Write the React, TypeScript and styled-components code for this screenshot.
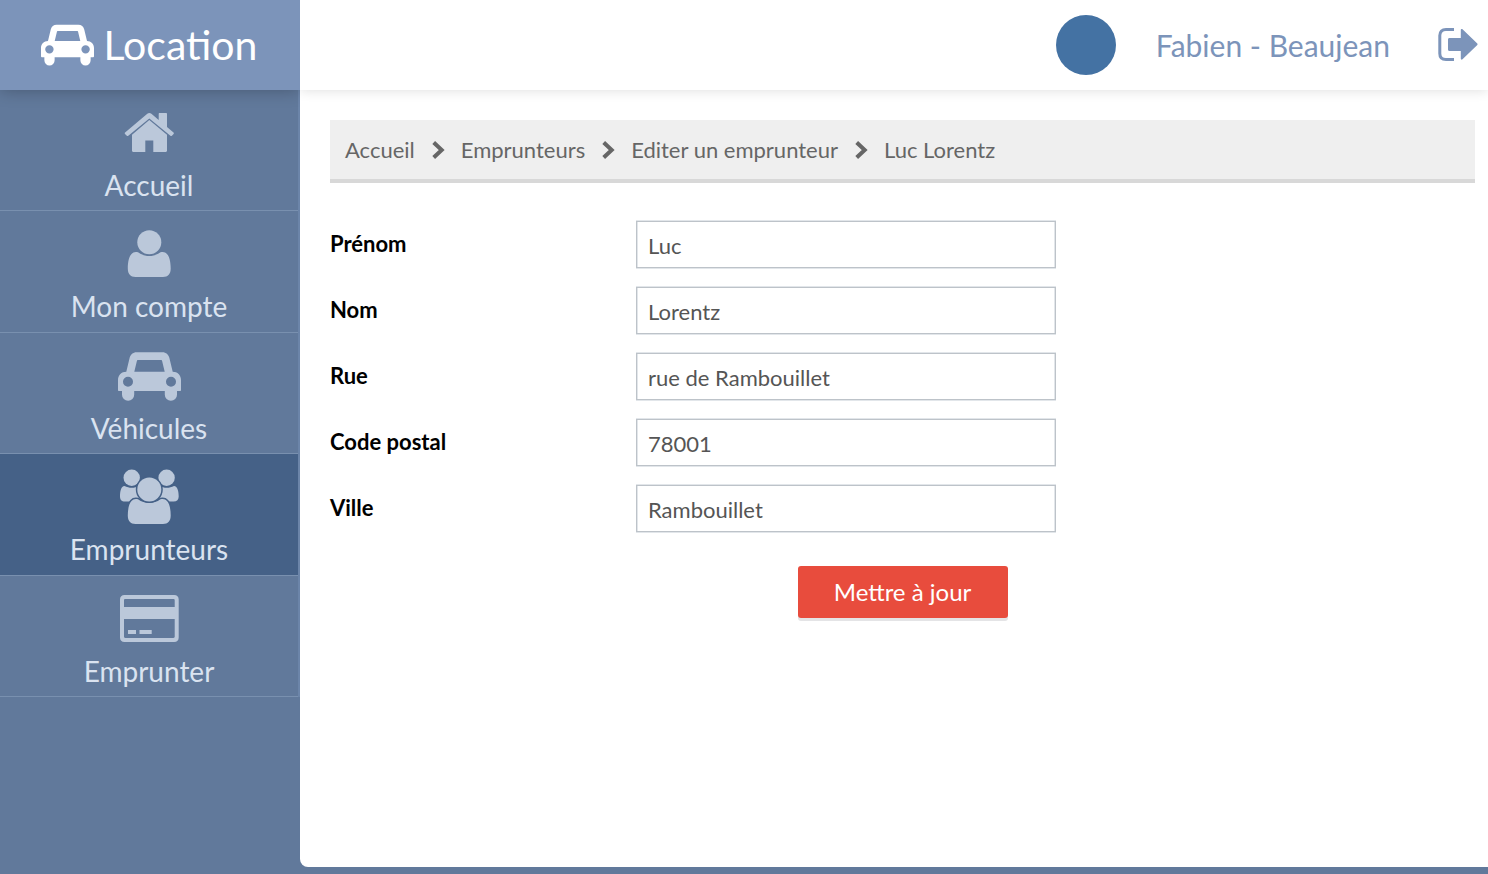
import React from "react";
import styled, { createGlobalStyle } from "styled-components";

const colors = {
  sidebar: "#61799b",
  active: "#456187",
  brand: "#7c94ba",
  line: "#7990af",
  edge: "#6c85a9",
  navText: "#dae3f0",
  navIcon: "#bbc8da",
};

const GlobalStyle = createGlobalStyle`
  *, *::before, *::after { box-sizing: border-box; }
  body {
    margin: 0;
    background: ${colors.sidebar};
    font-family: Lato, Calibri, "Liberation Sans", sans-serif;
  }
`;

const Page = styled.div`
  display: grid;
  grid-template-columns: 300px minmax(0, 1fr);
  grid-template-rows: 90px 1fr;
  min-height: 100vh;
`;

const Brand = styled.a`
  display: flex;
  align-items: center;
  justify-content: center;
  gap: 10px;
  padding-right: 2px;
  background: ${colors.brand};
  color: #fff;
  font-size: 41px;
  line-height: 48px;
  text-decoration: none;
  box-shadow: 0 0 16px rgba(0, 0, 0, 0.28);
  clip-path: inset(0 0 -24px 0);
  z-index: 1;
`;

const Header = styled.header`
  display: flex;
  align-items: center;
  justify-content: flex-end;
  padding-right: 10px;
  background: #fff;
  color: ${colors.brand};
  box-shadow: 0 0 12px rgba(0, 0, 0, 0.14);
  clip-path: inset(0 0 -20px 0);
  z-index: 1;
`;

const Avatar = styled.span`
  width: 60px;
  height: 60px;
  margin-right: 40px;
  border-radius: 50%;
  background: #4472a3;
`;

const UserName = styled.span`
  margin-right: 48px;
  font-size: 30px;
  line-height: 36px;
`;

const LogoutButton = styled.button`
  display: block;
  padding: 0;
  border: 0;
  background: none;
  color: inherit;
  cursor: pointer;

  svg {
    display: block;
  }
`;

const Sidebar = styled.nav`
  background: ${colors.sidebar};
`;

const NavList = styled.ul`
  display: grid;
  grid-auto-rows: 1fr;
  height: 607px;
  margin: 0;
  padding: 0;
  list-style: none;
  border-right: 2px solid ${colors.edge};
`;

const NavLink = styled.a<{ $active?: boolean }>`
  display: flex;
  flex-direction: column;
  align-items: center;
  height: 100%;
  padding-top: 11px;
  border-bottom: 1px solid ${colors.line};
  background: ${(p) => (p.$active ? colors.active : "transparent")};
  color: ${colors.navText};
  font-size: 28px;
  line-height: 34px;
  text-decoration: none;

  svg {
    flex: none;
    margin-bottom: 3px;
    color: ${colors.navIcon};
  }
`;

const Content = styled.main`
  margin-bottom: 7px;
  padding: 30px 13px 30px 30px;
  border-bottom-left-radius: 8px;
  background: #fff;
`;

const Breadcrumb = styled.ol`
  display: flex;
  flex-wrap: wrap;
  align-items: center;
  gap: 16px;
  min-height: 63px;
  margin: 0 0 38px;
  padding: 0 15px;
  border-bottom: 4px solid #d8d8d8;
  background: #efefef;
  list-style: none;
  color: #666;
  font-size: 22px;
  line-height: 28px;
`;

const Crumb = styled.li`
  display: flex;
  align-items: center;
  gap: 15px;

  a {
    color: inherit;
    text-decoration: none;
  }
`;

const Form = styled.form`
  display: flex;
  flex-direction: column;
  gap: 19px;
`;

const Field = styled.div`
  display: grid;
  grid-template-columns: 306px minmax(0, 420px);
  align-items: center;
`;

const Label = styled.label`
  padding-bottom: 2px;
  color: #000;
  font-size: 22px;
  font-weight: 700;
  line-height: 28px;
`;

const TextInput = styled.input`
  width: 100%;
  height: 47px;
  padding: 2px 10px 0 11px;
  border: 1px solid #bdc3c9;
  border-radius: 0;
  outline: none;
  background: #fff;
  box-shadow: 0 -1px #e2e6ea, 0 1px #e2e6ea, inset 1px 0 #e2e6ea, inset -1px 0 #e2e6ea;
  color: #555;
  font-family: inherit;
  font-size: 22px;
  line-height: 28px;
`;

const SubmitButton = styled.button`
  align-self: center;
  width: 210px;
  height: 52px;
  margin-top: 15px;
  padding: 0;
  border: 0;
  border-radius: 3px;
  background: #e84c3d;
  box-shadow: 0 3px #e4e4e6;
  color: #fff;
  font-family: inherit;
  font-size: 24px;
  line-height: 28px;
  cursor: pointer;
`;

const CarIcon = ({ width, height, viewBox }: { width: number; height: number; viewBox: string }) => (
  <svg width={width} height={height} viewBox={viewBox} fill="currentColor" aria-hidden="true">
    <path
      fillRule="evenodd"
      d="M8.3 19.7 11.6 6C12.4 2.600 15 .3 18.500 .3H44.500C48 .3 50.600 2.600 51.400 6L54.700 19.700C59.500 19.700 63 23.200 63 28V38C63 38.700 62.600 39 62 39H59V42.700A6.100 6.100 0 0 1 46.800 42.700V39H16.200V42.700A6.100 6.100 0 0 1 4 42.700V39H1C.4 39 0 38.700 0 38V28C0 23.200 3.500 19.700 8.300 19.700ZM16.300 19.700H46.700L44 8.600C43.900 8.200 43.700 8 43.300 8H19.700C19.300 8 19.100 8.200 19 8.600ZM10 24.700A5 5 0 1 0 10 34.700A5 5 0 1 0 10 24.700ZM53 24.700A5 5 0 1 0 53 34.700A5 5 0 1 0 53 24.700Z"
    />
  </svg>
);

const HomeIcon = () => (
  <svg width="64" height="64" viewBox="0 0 64 64" fill="currentColor" aria-hidden="true">
    <path d="M30.300 12.800C31.500 11.700 33.200 11.700 34.400 12.800L41.700 19V13C41.700 12.400 42.100 12 42.700 12H49C49.600 12 50 12.400 50 13V26L56.500 31.500C57 31.900 57 32.500 56.600 33L54.900 34.700C54.500 35.200 53.900 35.200 53.400 34.800L32.300 17.500 11.300 34.800C10.800 35.200 10.200 35.200 9.800 34.700L8 33C7.600 32.500 7.600 31.900 8.100 31.500Z" />
    <path d="M32.300 19 50 33.700V49.500C50 50.400 49.400 51 48.500 51H36.300V39.500H28.300V51H16.500C15.600 51 15 50.400 15 49.500V33.700Z" />
  </svg>
);

const bodyPath =
  "M21 31.300C18 30.600 16 31.300 14.500 33 12.200 35.500 10.800 40.500 10.800 47.500 10.800 53 13.500 56 18.500 56H46C51 56 53.700 53 53.700 47.500 53.700 40.500 52.300 35.500 50 33 48.500 31.300 46.500 30.600 43.500 31.300 36.500 36.300 28 36.300 21 31.300Z";

const UserIcon = () => (
  <svg width="64" height="64" viewBox="0 1 64 64" fill="currentColor" aria-hidden="true">
    <circle cx="32.300" cy="21.300" r="12" />
    <path d={bodyPath} />
  </svg>
);

const UsersIcon = () => (
  <svg width="64" height="64" viewBox="0 0 64 64" fill="currentColor" aria-hidden="true">
    <circle cx="14.700" cy="12.800" r="8.200" />
    <circle cx="49.600" cy="12.800" r="8.200" />
    <path d="M7.500 20.900C12 23.300 17.500 23.300 22 20.900L30 24V36.500H8C4.500 36.500 3 34.500 3 31.500 3 26.500 4 20.900 7.500 20.900Z" />
    <path d="M57 20.900C52.500 23.300 47 23.300 42.500 20.900L34.500 24V36.500H56.500C60 36.500 61.700 34.500 61.700 31.500 61.700 26.500 60.500 20.900 57 20.900Z" />
    <g stroke={colors.active} strokeWidth="3" paintOrder="stroke">
      <path d={bodyPath} transform="translate(0 3)" />
      <circle cx="32.300" cy="24.500" r="12" />
    </g>
  </svg>
);

const CardIcon = () => (
  <svg width="64" height="64" viewBox="0 0 64 64" fill="currentColor" aria-hidden="true">
    <path
      fillRule="evenodd"
      d="M7.500 8H57.200C60 8 61.700 9.700 61.700 12.500V50.500C61.700 53.300 60 55 57.200 55H7.500C4.700 55 3 53.300 3 50.500V12.500C3 9.700 4.700 8 7.500 8ZM8.300 12C7.500 12 7 12.500 7 13.300V20H57.700V13.300C57.700 12.500 57.200 12 56.400 12ZM7 32V49.800C7 50.500 7.500 51 8.300 51H56.400C57.200 51 57.700 50.500 57.700 49.800V32Z"
    />
    <path d="M11 43H19V47H11ZM22.500 43H34.700V47H22.500Z" />
  </svg>
);

const LogoutIcon = () => (
  <svg width="40" height="34" viewBox="0 1 40 34" aria-hidden="true">
    <path d="M16 2.500H8C4 2.500 1.800 4.700 1.800 8.500V26.500C1.800 30.300 4 32.500 8 32.500H16" fill="none" stroke="currentColor" strokeWidth="3" />
    <path d="M11.500 11H22.800V3C22.800 2 23.800 1.600 24.500 2.300L39.300 16.600C39.700 17 39.700 17.500 39.300 17.900L24.500 32.300C23.800 33 22.800 32.600 22.800 31.600V24H11.500C10.500 24 10 23.400 10 22.500V12.500C10 11.600 10.500 11 11.500 11Z" fill="currentColor" />
  </svg>
);

const ChevronIcon = () => (
  <svg width="15" height="20" viewBox="0 0 15 20" fill="none" stroke="#666" strokeWidth="4" aria-hidden="true">
    <path d="M2.700 2.500 10.700 10 2.700 17.500" />
  </svg>
);

const navItems = [
  { label: "Accueil", icon: <HomeIcon /> },
  { label: "Mon compte", icon: <UserIcon /> },
  { label: "Véhicules", icon: <CarIcon width={64} height={64} viewBox="-1 -8 64 64" /> },
  { label: "Emprunteurs", icon: <UsersIcon />, active: true },
  { label: "Emprunter", icon: <CardIcon /> },
];

const crumbs = ["Accueil", "Emprunteurs", "Editer un emprunteur", "Luc Lorentz"];

const fields = [
  { id: "prenom", label: "Prénom", value: "Luc" },
  { id: "nom", label: "Nom", value: "Lorentz" },
  { id: "rue", label: "Rue", value: "rue de Rambouillet" },
  { id: "code-postal", label: "Code postal", value: "78001" },
  { id: "ville", label: "Ville", value: "Rambouillet" },
];

export default function App() {
  return (
    <>
      <GlobalStyle />
      <Page>
        <Brand href="#">
          <CarIcon width={53} height={42} viewBox="0 0 63 49" />
          <span>Location</span>
        </Brand>
        <Header>
          <Avatar />
          <UserName>Fabien - Beaujean</UserName>
          <LogoutButton type="button" aria-label="Déconnexion">
            <LogoutIcon />
          </LogoutButton>
        </Header>
        <Sidebar>
          <NavList>
            {navItems.map((item) => (
              <li key={item.label}>
                <NavLink href="#" $active={item.active} aria-current={item.active ? "page" : undefined}>
                  {item.icon}
                  <span>{item.label}</span>
                </NavLink>
              </li>
            ))}
          </NavList>
        </Sidebar>
        <Content>
          <Breadcrumb>
            {crumbs.map((crumb, i) => (
              <Crumb key={crumb}>
                {i > 0 && <ChevronIcon />}
                {i < crumbs.length - 1 ? <a href="#">{crumb}</a> : <span>{crumb}</span>}
              </Crumb>
            ))}
          </Breadcrumb>
          <Form onSubmit={(e) => e.preventDefault()}>
            {fields.map((field) => (
              <Field key={field.id}>
                <Label htmlFor={field.id}>{field.label}</Label>
                <TextInput id={field.id} type="text" defaultValue={field.value} />
              </Field>
            ))}
            <SubmitButton type="submit">Mettre à jour</SubmitButton>
          </Form>
        </Content>
      </Page>
    </>
  );
}
